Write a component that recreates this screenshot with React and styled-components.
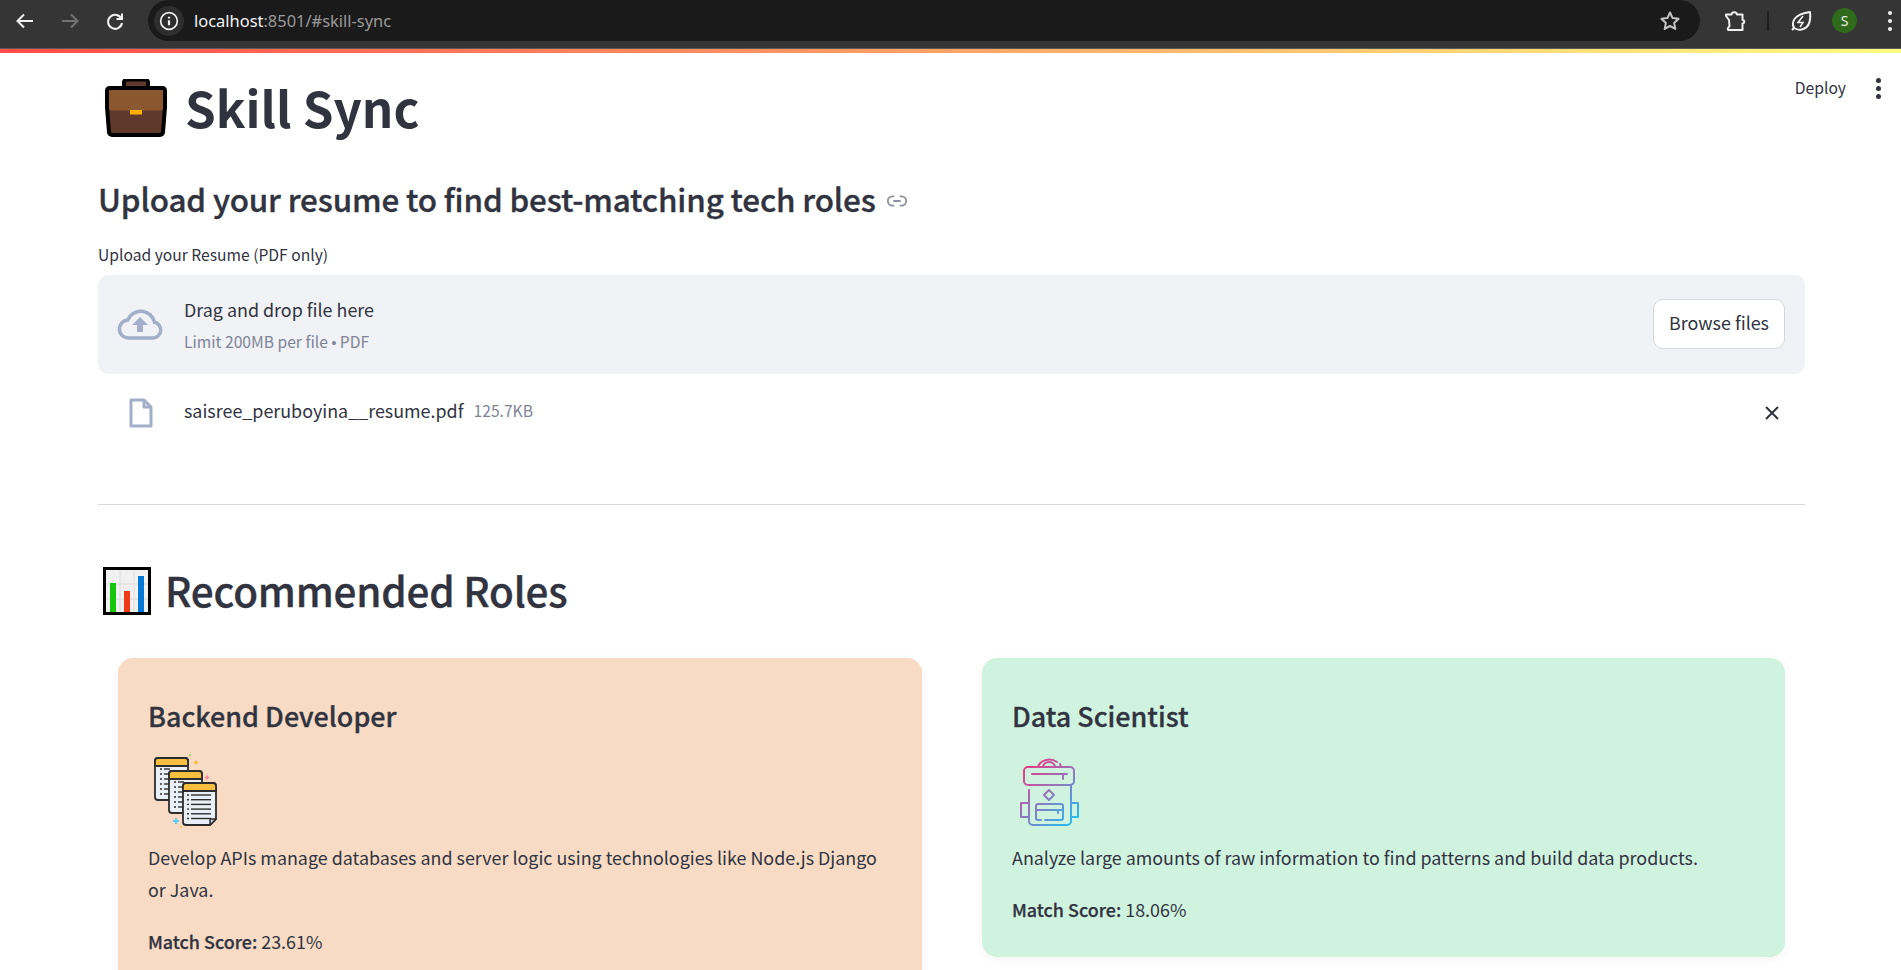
import React from "react";
import styled, { createGlobalStyle } from "styled-components";

const Global = createGlobalStyle`
  html, body { margin: 0; padding: 0; height: 970px; overflow: hidden; background: #fff; }
  body { font-family: "Noto Sans CJK SC", "Noto Sans CJK JP", "Noto Sans", sans-serif; color: #31333f; }
  * { box-sizing: border-box; }
`;

const Page = styled.div`
  position: relative;
  height: 970px;
  overflow: hidden;
  background: #fff;
`;
const BrowserBar = styled.header`
  height: 49px;
  background: #353535;
  border-bottom: 1px solid #5a5a5a;
  display: flex;
  align-items: flex-start;
`;
const NavGroup = styled.div`
  width: 148px;
  height: 41px;
  display: flex;
  align-items: center;
  padding-left: 13px;
  gap: 21px;
`;
const NavIcon = styled.svg`
  width: ${(p) => p.$size || 24}px;
  height: ${(p) => p.$size || 24}px;
  flex: none;
  fill: none;
  stroke: ${(p) => p.$c || "#f1f1f1"};
  stroke-width: 2;
`;
const AddressBar = styled.div`
  width: 1552px;
  height: 41px;
  background: #1a1a1a;
  border-radius: 21px;
  display: flex;
  align-items: center;
  padding: 0 18px 0 6px;
`;
const InfoChip = styled.div`
  width: 30px;
  height: 30px;
  border-radius: 50%;
  background: #2e2e2e;
  display: flex;
  align-items: center;
  justify-content: center;
  flex: none;
`;
const Url = styled.div`
  margin-left: 10px;
  flex: 1;
  font-family: "Noto Sans", sans-serif;
  font-size: 16.45px;
  color: #9a9a9a;
  b { font-weight: 400; color: #f4f4f4; }
`;
const BrowserTools = styled.div`
  flex: 1;
  height: 41px;
  display: flex;
  align-items: center;
  padding-left: 22px;
`;
const Divider = styled.div`
  width: 2px;
  height: 20px;
  background: #1f1f1f;
  margin: 0 20px 0 21px;
`;
const Avatar = styled.div`
  width: 25px;
  height: 25px;
  border-radius: 50%;
  background: #2f6a1c;
  color: #e8f2e4;
  font: 400 14px "Noto Sans", sans-serif;
  display: flex;
  align-items: center;
  justify-content: center;
  margin: 0 31px 0 19px;
  flex: none;
`;
const Dots = styled.div`
  display: flex;
  flex-direction: column;
  gap: ${(p) => p.$gap || 4}px;
  flex: none;
  span {
    width: ${(p) => p.$size || 4}px;
    height: ${(p) => p.$size || 4}px;
    border-radius: 50%;
    background: ${(p) => p.$c || "#f1f1f1"};
  }
`;
const Rainbow = styled.div`
  height: 4px;
  background: linear-gradient(90deg, #ff4b4b, #fffd80);
`;
const Toolbar = styled.div`
  position: absolute;
  top: 77px;
  right: 20px;
  display: flex;
  align-items: center;
  gap: 30px;
`;
const DeployLabel = styled.span`
  font-size: 15.65px;
  line-height: 22px;
  color: #31333f;
`;
const Main = styled.main`
  padding: 0 96px 0 98px;
`;
const TitleRow = styled.div`
  display: flex;
  align-items: center;
  height: 80px;
  margin-top: 14px;
  padding-left: 7px;
  gap: 18px;
`;
const BriefcaseMark = styled.svg`
  margin-top: 2px;
  flex: none;
`;
const Title = styled.h1`
  margin: 0;
  font-size: 49.3px;
  line-height: 72px;
  font-weight: 700;
  color: #31333f;
`;
const SubRow = styled.div`
  display: flex;
  align-items: center;
  height: 46px;
  margin-top: 29px;
  gap: 10px;
`;
const SubHeading = styled.h3`
  margin: 0;
  font-size: 31.4px;
  line-height: 46px;
  font-weight: 500;
  letter-spacing: -0.14px;
  -webkit-text-stroke: 0.35px #31333f;
  color: #31333f;
`;
const LinkMark = styled.svg`
  margin-top: 4px;
  flex: none;
`;
const FieldLabel = styled.label`
  display: block;
  margin-top: 21px;
  font-size: 15.65px;
  line-height: 24px;
  height: 24px;
  color: #31333f;
`;
const Dropzone = styled.section`
  height: 99px;
  margin-top: 8px;
  background: #f0f2f6;
  border-radius: 10px;
  display: flex;
  align-items: center;
  padding: 0 20px 0 19px;
`;
const DropText = styled.div`
  margin-left: 21px;
  flex: 1;
`;
const DropTitle = styled.div`
  font-size: 17.9px;
  line-height: 28px;
  color: #31333f;
`;
const DropHint = styled.div`
  margin-top: 7px;
  font-size: 15.65px;
  line-height: 24px;
  color: #808495;
`;
const Bullet = styled.span`
  font-family: "Liberation Sans", sans-serif;
  font-size: 14px;
`;
const BrowseButton = styled.button`
  width: 132px;
  height: 50px;
  margin-top: -2px;
  padding: 0 0 3px;
  background: #fff;
  border: 1px solid #d5d6da;
  border-radius: 10px;
  font: inherit;
  font-size: 17.9px;
  color: #31333f;
`;
const FileRow = styled.div`
  height: 62px;
  display: flex;
  align-items: center;
  padding: 12px 25px 0 31px;
  margin-top: 2px;
`;
const FileName = styled.div`
  margin-left: 31px;
  font-size: 17.9px;
  line-height: 28px;
  margin-top: -7px;
  color: #31333f;
`;
const FileSize = styled.span`
  margin-left: 10px;
  margin-top: -6px;
  font-size: 15.65px;
  color: #808495;
  flex: 1;
`;
const Rule = styled.hr`
  margin: 66px 0 0;
  border: 0;
  border-top: 1px solid #d8d9dc;
`;
const RolesRow = styled.div`
  display: flex;
  align-items: center;
  margin-top: 56px;
  padding-left: 5px;
  height: 58px;
  gap: 14px;
`;
const ChartMark = styled.svg`
  margin-top: 2px;
  flex: none;
`;
const RolesHeading = styled.h2`
  margin: 0;
  font-size: 40.4px;
  line-height: 58px;
  font-weight: 500;
  letter-spacing: -0.2px;
  -webkit-text-stroke: 0.35px #31333f;
  color: #31333f;
`;
const CardGrid = styled.div`
  display: grid;
  grid-template-columns: 804px 803px;
  column-gap: 60px;
  align-items: start;
  margin: 39px 20px 0;
`;
const Card = styled.article`
  background: ${(p) => p.$bg};
  border-radius: 15px;
  padding: 36px 30px 32px;
  box-shadow: 0 2px 10px rgba(0, 0, 0, 0.05);
`;
const CardTitle = styled.h3`
  margin: 0;
  font-size: 26.9px;
  line-height: 44px;
  font-weight: 500;
  -webkit-text-stroke: 0.3px #31333f;
  color: #31333f;
`;
const CardIcon = styled.svg`
  display: block;
  width: 73px;
  height: 73px;
  margin: 17px 0 0;
  overflow: visible;
`;
const CardText = styled.p`
  margin: 13px 0 0;
  font-size: 17.9px;
  line-height: 32px;
  color: #31333f;
`;
const Score = styled.p`
  margin: 20px 0 0;
  font-size: 17.9px;
  line-height: 32px;
  color: #31333f;
  strong { font-weight: 500; -webkit-text-stroke: 0.25px #31333f; }
`;

const Briefcase = () => (
  <BriefcaseMark width="62" height="58" viewBox="0 2 62 58">
    <path d="M19 11V6a3 3 0 0 1 3-3.500h18a3 3 0 0 1 3 3.500v5" fill="#5f3a2c" stroke="#000" strokeWidth="4" />
    <path d="M4.500 11h53a2.500 2.500 0 0 1 2.500 2.500V30l-2 25a3 3 0 0 1-3 3H7a3 3 0 0 1-3-3L2 30V13.500A2.500 2.500 0 0 1 4.500 11z" fill="#5f3a2c" stroke="#000" strokeWidth="4" strokeLinejoin="round" />
    <path d="M5 13h52a1 1 0 0 1 1 1v18l-1.500 1.500h-51L4 32V14a1 1 0 0 1 1-1z" fill="#8b572e" />
    <rect x="25" y="33" width="12" height="4.500" fill="#ffb000" />
  </BriefcaseMark>
);

const ChartEmoji = () => (
  <ChartMark width="48" height="48" viewBox="0 0 48 48">
    <rect x="1.500" y="1.500" width="45" height="45" fill="#f1f1f1" stroke="#000" strokeWidth="3" />
    <path d="M17 3v42M31 3v42M3 17h42M3 32h42" stroke="#e2e2e2" strokeWidth="1.500" />
    <rect x="7" y="16" width="6" height="29" fill="#16c60c" />
    <rect x="21" y="24" width="6" height="21" fill="#f03a17" />
    <rect x="35" y="9" width="6" height="36" fill="#0078d7" />
  </ChartMark>
);

const Lines = ({ x, y, n, w, h }) => (
  <g stroke="#2d2d2d" strokeWidth="1.400">
    {Array.from({ length: n }).map((_, i) => (
      <g key={i}>
        <path d={`M${x} ${y + i * h}h2`} />
        <path d={`M${x + 4} ${y + i * h}h${w}`} />
      </g>
    ))}
  </g>
);

const Sheet = ({ x, y, folded }) => (
  <g strokeLinejoin="round" stroke="#2d2d2d" strokeWidth="1.800">
    <path
      d={
        folded
          ? `M${x} ${y + 3}a3 3 0 0 1 3-3h27a3 3 0 0 1 3 3v33l-6 6H${x + 3}a3 3 0 0 1-3-3z`
          : `M${x} ${y + 3}a3 3 0 0 1 3-3h27a3 3 0 0 1 3 3v36a3 3 0 0 1-3 3H${x + 3}a3 3 0 0 1-3-3z`
      }
      fill="#eaf0f8"
    />
    <path d={`M${x} ${y + 8}v-5a3 3 0 0 1 3-3h27a3 3 0 0 1 3 3v5z`} fill="#f6bf3f" />
    {folded && <path d={`M${x + 27} ${y + 42}v-5a1 1 0 0 1 1-1h5z`} fill="#cfd6e0" strokeWidth="1.500" />}
  </g>
);

const DocsIcon = () => (
  <CardIcon viewBox="0 0 73 73">
    <Sheet x={7} y={3} />
    <Lines x={12} y={14} n={6} w={6} h={5} />
    <Sheet x={21} y={16} />
    <Lines x={26} y={27} n={6} w={6} h={5} />
    <Sheet x={35} y={28} folded />
    <Lines x={39} y={40} n={6} w={20} h={4.700} />
    <path d="M25 66h6M28 63v6" stroke="#63cbf0" strokeWidth="2.200" />
    <rect x="41" y="-1" width="2" height="2" fill="#a9d15a" />
    <path d="M48 4.500l1 2 2 1-2 1-1 2-1-2-2-1 2-1z" fill="#f6bf3f" />
    <path d="M59 19.500l1 2 2 1-2 1-1 2-1-2-2-1 2-1z" fill="#f78b9b" />
    <circle cx="33" cy="72" r="1" fill="#f6bf3f" />
  </CardIcon>
);

const BackpackIcon = () => (
  <CardIcon viewBox="0 0 73 73" fill="none">
    <defs>
      <linearGradient id="packGrad" gradientUnits="userSpaceOnUse" x1="12" y1="8" x2="64" y2="68">
        <stop offset="0" stopColor="#f4327f" />
        <stop offset="0.5" stopColor="#8f78bd" />
        <stop offset="1" stopColor="#1fc0f5" />
      </linearGradient>
    </defs>
    <g stroke="url(#packGrad)" strokeWidth="2" strokeLinecap="round" strokeLinejoin="round">
      <rect x="12" y="12" width="50" height="18" rx="4" />
      <path d="M20 19h35M51 19v5" />
      <path d="M26 12a11.500 9 0 0 1 19-5M48 9l1 3M31 12a6 5 0 0 1 12 0" />
      <path d="M17 35v31a4 4 0 0 0 4 4h34a4 4 0 0 0 4-4V30" />
      <path d="M37 35l5 5-5 5-5-5z" />
      <path d="M29 65h-3a2 2 0 0 1-2-2V51a2 2 0 0 1 2-2h23a2 2 0 0 1 2 2v12a2 2 0 0 1-2 2H33" />
      <path d="M24 55h27M46 55v3" />
      <path d="M17 48h-8v14h8M59 48h7v14h-7" />
    </g>
  </CardIcon>
);

export default function App() {
  return (
    <Page>
      <Global />
      <BrowserBar>
        <NavGroup>
          <NavIcon viewBox="0 0 24 24"><path d="M20 12H5M11 5.500 4.500 12l6.500 6.500" /></NavIcon>
          <NavIcon viewBox="0 0 24 24" $c="#727272"><path d="M4 12h15M13 5.500l6.500 6.500-6.500 6.500" /></NavIcon>
          <NavIcon viewBox="0 0 24 24"><path d="M18.500 10A7 7 0 1 0 19 14" /><path d="M19 4.500V10h-5.500" /></NavIcon>
        </NavGroup>
        <AddressBar>
          <InfoChip>
            <NavIcon viewBox="0 0 24 24" $size={20}>
              <circle cx="12" cy="12" r="10" />
              <path d="M12 11v6M12 7v2" strokeWidth="2.600" />
            </NavIcon>
          </InfoChip>
          <Url><b>localhost</b>:8501/#skill-sync</Url>
          <NavIcon viewBox="0 0 24 24" $c="#c4c4c4">
            <path d="M12 3.500l2.600 5.600 6 .7-4.500 4.100 1.200 6L12 17l-5.300 2.900 1.200-6-4.500-4.100 6-.7z" strokeLinejoin="round" />
          </NavIcon>
        </AddressBar>
        <BrowserTools>
          <NavIcon viewBox="0 0 24 24">
            <path d="M4 5.500h5.500a2.800 2.800 0 0 1 5.500 0h5.500V11a1 1 0 0 1 0 3.500V21H6.500a1 1 0 0 1-.500-1.700L7.500 17l-.5-6L4 7z" strokeLinejoin="round" />
          </NavIcon>
          <Divider />
          <NavIcon viewBox="0 0 24 24">
            <path d="M5 19C2 13 5 5 21 3c1 9-1 16-8.500 17.500-3 .5-5.500-.2-7.500-1.500l-2 2" strokeLinejoin="round" />
            <path d="M14 7l-5 6.500h5L11 18" strokeWidth="1.500" />
          </NavIcon>
          <Avatar>S</Avatar>
          <Dots><span /><span /><span /></Dots>
        </BrowserTools>
      </BrowserBar>
      <Rainbow />
      <Toolbar>
        <DeployLabel>Deploy</DeployLabel>
        <Dots $c="#31333f" $size={5} $gap={3}><span /><span /><span /></Dots>
      </Toolbar>
      <Main>
        <TitleRow>
          <Briefcase />
          <Title>Skill Sync</Title>
        </TitleRow>
        <SubRow>
          <SubHeading>Upload your resume to find best-matching tech roles</SubHeading>
          <LinkMark width="22" height="22" viewBox="0 0 24 24" fill="none" stroke="#8f919c" strokeWidth="2">
            <path d="M9 7H7a5 5 0 0 0 0 10h2M15 7h2a5 5 0 0 1 0 10h-2M8 12h8" />
          </LinkMark>
        </SubRow>
        <FieldLabel>Upload your Resume (PDF only)</FieldLabel>
        <Dropzone>
          <svg width="46" height="46" viewBox="0 0 46 46" fill="none">
            <path d="M12 36h24a8 8 0 0 0 1.500-15.800A14 14 0 0 0 10.800 18 9 9 0 0 0 12 36z" stroke="#a3aec9" strokeWidth="3.500" />
            <path d="M23 15l8 8h-5v7h-6v-7h-5z" fill="#a3aec9" />
          </svg>
          <DropText>
            <DropTitle>Drag and drop file here</DropTitle>
            <DropHint>Limit 200MB per file <Bullet>•</Bullet> PDF</DropHint>
          </DropText>
          <BrowseButton>Browse files</BrowseButton>
        </Dropzone>
        <FileRow>
          <svg width="24" height="30" viewBox="0 0 24 30" fill="none">
            <path d="M2 2h13l7 7v19H2z" stroke="#a3aec9" strokeWidth="3" strokeLinejoin="round" />
            <path d="M15 2v7h7" stroke="#a3aec9" strokeWidth="3" strokeLinejoin="round" />
          </svg>
          <FileName>saisree_peruboyina__resume.pdf</FileName>
          <FileSize>125.7KB</FileSize>
          <svg width="16" height="16" viewBox="0 0 16 16" stroke="#31333f" strokeWidth="2">
            <path d="M2 2l12 12M14 2L2 14" />
          </svg>
        </FileRow>
        <Rule />
        <RolesRow>
          <ChartEmoji />
          <RolesHeading>Recommended Roles</RolesHeading>
        </RolesRow>
        <CardGrid>
          <Card $bg="#f7dbc4">
            <CardTitle>Backend Developer</CardTitle>
            <DocsIcon />
            <CardText>Develop APIs manage databases and server logic using technologies like Node.js Django or Java.</CardText>
            <Score><strong>Match Score:</strong> 23.61%</Score>
          </Card>
          <Card $bg="#d0f3df">
            <CardTitle>Data Scientist</CardTitle>
            <BackpackIcon />
            <CardText>Analyze large amounts of raw information to find patterns and build data products.</CardText>
            <Score><strong>Match Score:</strong> 18.06%</Score>
          </Card>
        </CardGrid>
      </Main>
    </Page>
  );
}
